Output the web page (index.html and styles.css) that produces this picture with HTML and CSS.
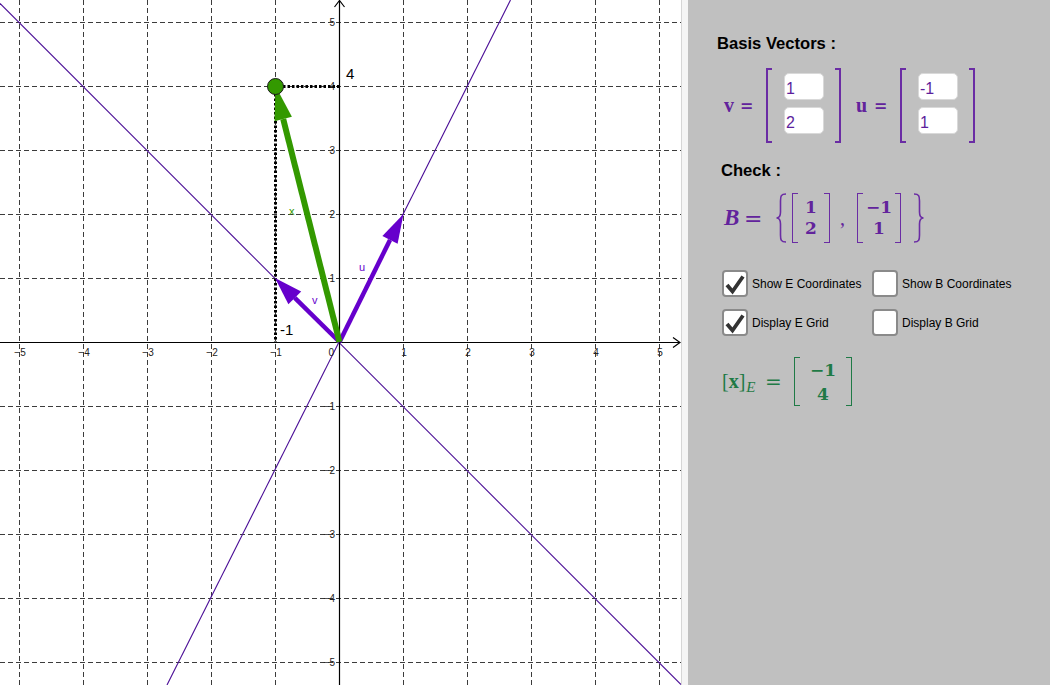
FILE: index.html
```html
<!DOCTYPE html>
<html>
<head>
<meta charset="utf-8">
<link rel="stylesheet" href="styles.css">
</head>
<body>
<div class="app">
  <div class="graphics">
    <svg class="plot" width="681" height="685" viewBox="0 0 681 685">
      <g class="grid">
        <line x1="19.5" y1="0" x2="19.5" y2="685"/>
        <line x1="83.5" y1="0" x2="83.5" y2="685"/>
        <line x1="147.5" y1="0" x2="147.5" y2="685"/>
        <line x1="211.5" y1="0" x2="211.5" y2="685"/>
        <line x1="275.5" y1="0" x2="275.5" y2="685"/>
        <line x1="403.5" y1="0" x2="403.5" y2="685"/>
        <line x1="467.5" y1="0" x2="467.5" y2="685"/>
        <line x1="531.5" y1="0" x2="531.5" y2="685"/>
        <line x1="595.5" y1="0" x2="595.5" y2="685"/>
        <line x1="659.5" y1="0" x2="659.5" y2="685"/>
        <line x1="0" y1="22.5" x2="681" y2="22.5"/>
        <line x1="0" y1="86.5" x2="681" y2="86.5"/>
        <line x1="0" y1="150.5" x2="681" y2="150.5"/>
        <line x1="0" y1="214.5" x2="681" y2="214.5"/>
        <line x1="0" y1="278.5" x2="681" y2="278.5"/>
        <line x1="0" y1="406.5" x2="681" y2="406.5"/>
        <line x1="0" y1="470.5" x2="681" y2="470.5"/>
        <line x1="0" y1="534.5" x2="681" y2="534.5"/>
        <line x1="0" y1="598.5" x2="681" y2="598.5"/>
        <line x1="0" y1="662.5" x2="681" y2="662.5"/>
      </g>
      <g class="spans">
        <line x1="510.5" y1="0" x2="167" y2="685"/>
        <line x1="0" y1="3.5" x2="681" y2="684.5"/>
      </g>
      <g class="axes">
        <line x1="0" y1="342.5" x2="680" y2="342.5"/>
        <line x1="339.5" y1="1" x2="339.5" y2="685"/>
        <polyline points="673,337.5 680,342.5 673,347.5"/>
        <polyline points="334.5,7 339.5,0.5 344.5,7"/>
      </g>
      <g class="ticklabels">
        <text x="20" y="356" text-anchor="middle">−5</text>
        <text x="84" y="356" text-anchor="middle">−4</text>
        <text x="148" y="356" text-anchor="middle">−3</text>
        <text x="212" y="356" text-anchor="middle">−2</text>
        <text x="276" y="356" text-anchor="middle">−1</text>
        <text x="334" y="356" text-anchor="end">0</text>
        <text x="404" y="356" text-anchor="middle">1</text>
        <text x="468" y="356" text-anchor="middle">2</text>
        <text x="532" y="356" text-anchor="middle">3</text>
        <text x="596" y="356" text-anchor="middle">4</text>
        <text x="660" y="356" text-anchor="middle">5</text>
        <text x="335" y="26" text-anchor="end">5</text>
        <text x="335" y="90" text-anchor="end">4</text>
        <text x="335" y="154" text-anchor="end">3</text>
        <text x="335" y="218" text-anchor="end">2</text>
        <text x="335" y="282" text-anchor="end">1</text>
        <text x="335" y="410" text-anchor="end">−1</text>
        <text x="335" y="474" text-anchor="end">−2</text>
        <text x="335" y="538" text-anchor="end">−3</text>
        <text x="335" y="602" text-anchor="end">−4</text>
        <text x="335" y="666" text-anchor="end">−5</text>
      </g>
      <g class="dotted">
        <line x1="283" y1="86.5" x2="339" y2="86.5"/>
        <line x1="275.5" y1="94" x2="275.5" y2="342"/>
      </g>
      <g class="vec-purple">
        <line x1="339.5" y1="342" x2="294.8" y2="297.8"/>
        <polygon points="275,278 301.2,291.4 288.4,304.2"/>
        <line x1="339.5" y1="342" x2="390" y2="240"/>
        <polygon points="403.5,214 397.6,243.7 382.4,236.1"/>
      </g>
      <g class="vec-green">
        <line x1="339.5" y1="342" x2="283.2" y2="119"/>
        <polygon points="275.5,86 291.9,116.8 274.5,121.2"/>
      </g>
      <circle class="pt" cx="275.5" cy="86.5" r="8"/>
      <text class="big" x="346" y="79">4</text>
      <text class="big" x="280" y="335">-1</text>
      <text class="lbl green" x="289" y="215">x</text>
      <text class="lbl purple" x="359" y="271">u</text>
      <text class="lbl purple" x="312" y="304">v</text>
    </svg>
  </div>
  <div class="divider"></div>
  <div class="algebra">
    <div class="heading basis">Basis Vectors :</div>
    <div class="vec-row">
      <span class="mvar v">v</span><span class="meq">=</span>
      <div class="matrix inputs">
        <span class="br left"></span>
        <div class="cells">
          <div class="inbox">1</div>
          <div class="inbox">2</div>
        </div>
        <span class="br right"></span>
      </div>
      <span class="mvar u">u</span><span class="meq">=</span>
      <div class="matrix inputs">
        <span class="br left"></span>
        <div class="cells">
          <div class="inbox">-1</div>
          <div class="inbox">1</div>
        </div>
        <span class="br right"></span>
      </div>
    </div>
    <div class="heading check">Check :</div>
    <div class="set-row">
      <span class="bvar">B</span><span class="beq">=</span>
      <svg class="brace lb" width="13" height="50" viewBox="0 0 13 50"><path d="M11 1 C6 1 5.5 3 5.5 8 L5.5 19 C5.5 23 4 25 1.5 25 C4 25 5.5 27 5.5 31 L5.5 42 C5.5 47 6 49 11 49"/></svg>
      <div class="matrix m1">
        <span class="br left"></span>
        <div class="nums"><span>1</span><span>2</span></div>
        <span class="br right"></span>
      </div>
      <span class="comma">,</span>
      <div class="matrix m2">
        <span class="br left"></span>
        <div class="nums"><span>−1</span><span>1</span></div>
        <span class="br right"></span>
      </div>
      <svg class="brace rb" width="13" height="50" viewBox="0 0 13 50"><path d="M2 1 C7 1 7.5 3 7.5 8 L7.5 19 C7.5 23 9 25 11.5 25 C9 25 7.5 27 7.5 31 L7.5 42 C7.5 47 7 49 2 49"/></svg>
    </div>
    <div class="checks">
      <div class="cb">
        <span class="box"><svg width="22" height="22" viewBox="0 0 22 22"><polyline points="3,12 8.5,18.5 19,3.5"/></svg></span>
        <span class="cbl">Show E Coordinates</span>
      </div>
      <div class="cb">
        <span class="box"></span>
        <span class="cbl">Show B Coordinates</span>
      </div>
      <div class="cb">
        <span class="box"><svg width="22" height="22" viewBox="0 0 22 22"><polyline points="3,12 8.5,18.5 19,3.5"/></svg></span>
        <span class="cbl">Display E Grid</span>
      </div>
      <div class="cb">
        <span class="box"></span>
        <span class="cbl">Display B Grid</span>
      </div>
    </div>
    <div class="xe-row">
      <span class="xlab"><span class="sq">[</span><b>x</b><span class="sq">]</span><i class="sub">E</i></span><span class="xeq">=</span>
      <div class="matrix m3">
        <span class="br left"></span>
        <div class="nums"><span>−1</span><span>4</span></div>
        <span class="br right"></span>
      </div>
    </div>
  </div>
</div>
</body>
</html>
```
FILE: styles.css
```css
* { box-sizing: border-box; }
html, body { margin: 0; padding: 0; }
body {
  width: 1050px;
  height: 685px;
  overflow: hidden;
  font-family: "Liberation Sans", Arial, sans-serif;
  background: #ffffff;
}
.app {
  display: flex;
  width: 1050px;
  height: 685px;
}
.graphics {
  width: 681px;
  height: 685px;
  background: #ffffff;
  flex: none;
}
.plot { display: block; }
.grid line {
  stroke: #3c3c3c;
  stroke-width: 1;
  stroke-dasharray: 5 3;
}
.spans line {
  stroke: #4a0d96;
  stroke-width: 1.1;
}
.axes line, .axes polyline {
  stroke: #000;
  stroke-width: 1.2;
  fill: none;
}
.ticklabels text {
  font-family: "Liberation Sans", Arial, sans-serif;
  font-size: 10px;
  fill: #222;
}
.dotted line {
  stroke: #000;
  stroke-width: 3;
  stroke-dasharray: 2.5 2;
}
.vec-purple line { stroke: #6600cc; stroke-width: 4.5; }
.vec-purple polygon { fill: #6600cc; }
.vec-green line { stroke: #339900; stroke-width: 6; }
.vec-green polygon { fill: #339900; }
.pt { fill: #339900; stroke: #1a1a1a; stroke-width: 1; }
.big {
  font-family: "Liberation Sans", Arial, sans-serif;
  font-size: 15px;
  fill: #000;
}
.lbl {
  font-family: "Liberation Sans", Arial, sans-serif;
  font-size: 11px;
}
.lbl.green { fill: #339900; }
.lbl.purple { fill: #6600cc; }

.divider {
  width: 7px;
  height: 685px;
  flex: none;
  background: #f5f5f5;
  border-left: 1px solid #d6d6d6;
}
.algebra {
  flex: 1;
  height: 685px;
  background: #c0c0c0;
  padding-top: 34px;
  display: flex;
  flex-direction: column;
  align-items: flex-start;
}
.heading {
  font-family: "Liberation Sans", Arial, sans-serif;
  font-weight: bold;
  font-size: 16.6px;
  line-height: 20px;
  height: 20px;
  color: #000;
}
.heading.basis { margin-left: 29px; }
.heading.check { margin-left: 33px; margin-top: 18px; }

.matrix {
  display: flex;
  align-items: stretch;
}
.br {
  display: block;
  width: 6px;
  border: 2px solid #6a2ca4;
}
.br.left { border-right: none; }
.br.right { border-left: none; }

.vec-row {
  margin-top: 14px;
  margin-left: 36px;
  height: 75px;
  display: flex;
  align-items: center;
  color: #62239c;
  font-family: "Liberation Serif", "Times New Roman", serif;
  font-weight: bold;
  font-size: 20px;
}
.mvar { display: inline-block; width: 16px; }
.mvar.u { margin-left: 15px; width: 18px; }
.meq {
  display: inline-block;
  width: 26px;
  font-family: "DejaVu Serif", serif;
  font-weight: bold;
  font-size: 16px;
}
.matrix.inputs { height: 75px; }
.cells {
  display: flex;
  flex-direction: column;
  gap: 7px;
  padding: 5px 11px 0 12px;
}
.inbox {
  width: 40px;
  height: 27px;
  background: #fff;
  border: 1px solid #d9d9d9;
  border-radius: 5px;
  font-family: "Liberation Sans", Arial, sans-serif;
  font-weight: normal;
  font-size: 16px;
  line-height: 29px;
  padding-left: 1px;
  color: #5d1f9c;
}

.set-row {
  margin-top: 12px;
  margin-left: 36px;
  height: 50px;
  display: flex;
  align-items: center;
  color: #62239c;
  font-family: "Liberation Serif", "Times New Roman", serif;
  font-weight: bold;
}
.bvar { font-style: italic; font-size: 23px; width: 20px; display: inline-block; }
.beq {
  font-family: "DejaVu Serif", serif;
  font-size: 22px;
  width: 22px;
  display: inline-block;
  text-align: left;
  font-weight: normal;
}
.brace { display: block; flex: none; }
.brace path { fill: none; stroke: #6a2ca4; stroke-width: 1.6; }
.brace.lb { margin-left: 9px; }
.brace.rb { margin-left: 11px; }
.matrix.m1 { height: 50px; margin-left: 4px; }
.matrix.m2 { height: 50px; margin-left: 7px; }
.nums {
  display: flex;
  flex-direction: column;
  justify-content: center;
  align-items: center;
  font-family: "DejaVu Serif", serif;
  font-weight: bold;
  font-size: 17px;
  line-height: 21px;
}
.m1 .nums { width: 26px; }
.m2 .nums { width: 32px; }
.m1 .br, .m2 .br { border-width: 1.5px; }
.m1 .br.left, .m2 .br.left { border-right: none; }
.m1 .br.right, .m2 .br.right { border-left: none; }
.comma {
  display: inline-block;
  width: 20px;
  padding-left: 10px;
  font-size: 20px;
  font-weight: normal;
}

.checks {
  margin-top: 27px;
  margin-left: 34px;
  display: grid;
  grid-template-columns: 150px auto;
  row-gap: 12px;
}
.cb {
  display: flex;
  align-items: center;
  height: 27px;
}
.box {
  width: 26px;
  height: 27px;
  flex: none;
  background: #fff;
  border: 2px solid #8a8a8a;
  border-radius: 4px;
  display: flex;
  align-items: center;
  justify-content: center;
}
.box svg polyline {
  fill: none;
  stroke: #333;
  stroke-width: 3.8;
  stroke-linejoin: miter;
}
.cbl {
  margin-left: 4px;
  font-family: "Liberation Sans", Arial, sans-serif;
  font-size: 12px;
  color: #000;
}

.xe-row {
  margin-top: 21px;
  margin-left: 34px;
  height: 49px;
  display: flex;
  align-items: center;
  color: #1f7a46;
  font-family: "Liberation Serif", "Times New Roman", serif;
}
.xlab { display: inline-block; width: 43px; font-size: 20px; }
.xlab b { font-weight: bold; }
.sub { font-size: 15px; font-style: italic; position: relative; top: 4px; margin-left: 1px; }
.xeq {
  display: inline-block;
  width: 29px;
  font-family: "DejaVu Serif", serif;
  font-size: 20px;
}
.matrix.m3 { height: 49px; }
.m3 .br { border-width: 1.5px; border-color: #1f7a46; }
.m3 .br.left { border-right: none; }
.m3 .br.right { border-left: none; }
.m3 .nums { width: 46px; font-size: 17px; line-height: 24px; }
```
